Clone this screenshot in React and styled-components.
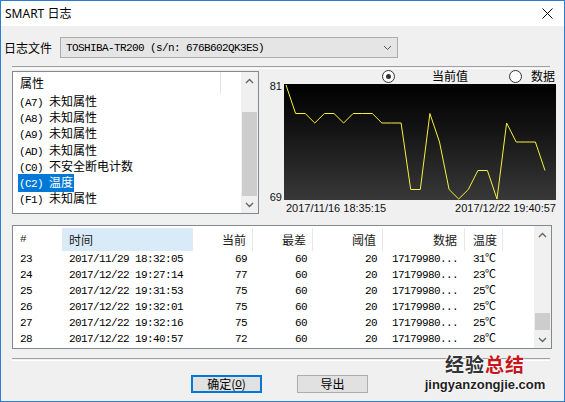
import React from 'react';
import styled, { createGlobalStyle, css } from 'styled-components';

const CJK = `"Noto Sans CJK SC", "Noto Sans", sans-serif`;
const MONO = `"Liberation Mono", "Noto Sans CJK SC", monospace`;
const SANS = `"Liberation Sans", Arial, sans-serif`;

const GlobalStyle = createGlobalStyle`
  html, body {
    margin: 0;
    padding: 0;
    background: #fff;
  }
  body {
    font-family: ${CJK};
    font-size: 12px;
    color: #000;
  }
`;

const Window = styled.div`
  position: relative;
  width: 565px;
  height: 402px;
  box-sizing: border-box;
  border: 1px solid #2b7fcf;
  display: flex;
  flex-direction: column;
  overflow: hidden;
`;

const TitleBar = styled.div`
  height: 25px;
  flex: none;
  background: #fff;
  display: flex;
  align-items: center;
  justify-content: space-between;
  padding: 0 11px 0 4px;
`;

const Title = styled.div`
  font-family: "Noto Sans", ${CJK};
  font-size: 12px;
  line-height: 14px;
`;

const Body = styled.div`
  flex: 1;
  background: #f0f0f0;
  display: flex;
  flex-direction: column;
  padding-top: 11px;
`;

const FileRow = styled.div`
  display: flex;
  align-items: center;
  height: 21px;
  padding-left: 3px;
`;

const Label = styled.div`
  width: 56px;
  font-size: 12px;
  line-height: 16px;
`;

const Combo = styled.div`
  width: 338px;
  height: 21px;
  box-sizing: border-box;
  border: 1px solid #acacac;
  background: #e5e5e5;
  display: flex;
  align-items: center;
  justify-content: space-between;
  padding: 0 5px 0 5px;
`;

const Mono = styled.span`
  font-family: ${MONO};
  font-size: 11px;
  letter-spacing: -0.6px;
  white-space: pre;
`;

const Separator = styled.div`
  margin: ${(p) => p.$top || 0}px 0 0 11px;
  width: 538px;
  height: 1px;
  border-top: 1px solid #a0a0a0;
  border-bottom: 1px solid #fff;
`;

const Middle = styled.div`
  display: flex;
  align-items: flex-start;
  margin-left: 11px;
  gap: 4px;
`;

const ListBox = styled.div`
  margin-top: 2px;
  width: 247px;
  height: 143px;
  box-sizing: border-box;
  border: 1px solid #828790;
  background: #fff;
  display: flex;
`;

const ListContent = styled.div`
  flex: 1;
  display: flex;
  flex-direction: column;
`;

const ListHeader = styled.div`
  height: 22px;
  display: flex;
`;

const ListHeaderCell = styled.div`
  width: 200px;
  padding-left: 7px;
  border-right: 1px solid #e5e5e5;
  line-height: 22px;
  font-size: 12px;
  color: #000;
`;

const ListRow = styled.div`
  height: 16.2px;
  line-height: 16px;
  padding-left: 5px;
  display: flex;
  align-items: center;
`;

const ListItem = styled.span`
  padding: 0 1px;
  line-height: 16px;
  ${(p) =>
    p.$selected &&
    css`
      background: #0078d7;
      color: #fff;
    `}
`;

const Name = styled.span`
  font-family: ${CJK};
  font-size: 12px;
`;

const ScrollBar = styled.div`
  width: 17px;
  flex: none;
  background: #f0f0f0;
  display: flex;
  flex-direction: column;
`;

const ArrowBox = styled.div`
  height: 17px;
  flex: none;
  display: flex;
  align-items: center;
  justify-content: center;
`;

const Track = styled.div`
  flex: 1;
  display: flex;
  flex-direction: column;
`;

const Thumb = styled.div`
  margin: ${(p) => p.$offset}px 1px 0;
  height: ${(p) => p.$size}px;
  background: #cdcdcd;
`;

const RightPanel = styled.div`
  width: 295px;
  display: flex;
  flex-direction: column;
`;

const RadioRow = styled.div`
  height: 14px;
  display: flex;
  justify-content: flex-end;
  align-items: center;
  gap: 41px;
  padding-right: 3px;
`;

const RadioOption = styled.div`
  width: ${(p) => p.$width}px;
  display: flex;
  align-items: center;
  justify-content: space-between;
  font-size: 12px;
  line-height: 14px;
`;

const RadioCircle = styled.span`
  width: 11px;
  height: 11px;
  border: 1px solid #333;
  border-radius: 50%;
  background: #fff;
  display: flex;
  align-items: center;
  justify-content: center;
  &::after {
    content: '';
    width: 5px;
    height: 5px;
    border-radius: 50%;
    background: ${(p) => (p.$checked ? '#333' : 'transparent')};
  }
`;

const ChartRow = styled.div`
  margin-top: 1px;
  display: grid;
  grid-template-columns: 21px 272px;
  height: 116px;
`;

const AxisLabels = styled.div`
  display: flex;
  flex-direction: column;
  justify-content: space-between;
  align-items: flex-end;
  padding-right: 2px;
  font-family: ${SANS};
  font-size: 11px;
  line-height: 11px;
  color: #111;
  margin-top: -3px;
  margin-bottom: -3px;
`;

const Chart = styled.div`
  background: linear-gradient(#000 0%, #141414 40%, #383838 100%);
  svg {
    display: block;
  }
`;

const DateRow = styled.div`
  height: 16px;
  display: flex;
  justify-content: space-between;
  align-items: center;
  padding: 0 2px 0 23px;
  font-family: ${SANS};
  font-size: 11px;
  color: #111;
`;

const Table = styled.div`
  margin: 9px 0 0 11px;
  width: 540px;
  height: 124px;
  box-sizing: border-box;
  border: 1px solid #828790;
  background: #fff;
  display: flex;
`;

const TableContent = styled.div`
  flex: 1;
  display: flex;
  flex-direction: column;
`;

const COLS = '50px 130px 60px 60px 70px 82px 38px 1fr';

const HeaderRow = styled.div`
  display: grid;
  grid-template-columns: ${COLS};
  height: 25px;
`;

const HeaderCell = styled.div`
  font-size: 12px;
  line-height: 23px;
  margin-top: 2px;
  color: #1a1a1a;
  border-right: 1px solid ${(p) => (p.$last ? 'transparent' : '#e8e8e8')};
  text-align: ${(p) => p.$align};
  padding: ${(p) => (p.$align === 'right' ? `0 ${p.$pad}px 0 0` : `0 0 0 ${p.$pad}px`)};
  background: ${(p) => (p.$active ? '#d9ebf9' : 'transparent')};
  ${(p) =>
    p.$hash &&
    css`
      font-family: ${MONO};
      font-size: 11px;
    `}
`;

const DataRow = styled.div`
  display: grid;
  grid-template-columns: ${COLS};
  height: 16px;
  align-items: center;
`;

const Cell = styled.div`
  font-family: ${MONO};
  font-size: 11px;
  letter-spacing: -0.6px;
  line-height: 16px;
  white-space: pre;
  text-align: ${(p) => p.$align};
  padding: ${(p) => (p.$align === 'right' ? `0 ${p.$pad}px 0 0` : `0 0 0 ${p.$pad}px`)};
`;

const ButtonRow = styled.div`
  margin-top: 14px;
  display: flex;
  gap: 35px;
  padding-left: 190px;
`;

const Button = styled.div`
  width: 71px;
  height: 18px;
  box-sizing: border-box;
  background: #e1e1e1;
  border: 1px solid ${(p) => (p.$default ? '#0078d7' : '#adadad')};
  box-shadow: ${(p) => (p.$default ? 'inset 0 0 0 1px #0078d7' : 'none')};
  display: flex;
  align-items: center;
  justify-content: center;
  font-size: 12px;
  line-height: 14px;
  u {
    font-family: ${MONO};
    font-size: 11px;
  }
`;

const Watermark = styled.div`
  position: absolute;
  left: 414px;
  top: 353px;
  display: flex;
  flex-direction: column;
  align-items: center;
  width: 140px;
  text-shadow: 0 0 2px #fff, 0 0 2px #fff, 0 0 1px #fff;
`;

const WmTitle = styled.div`
  font-family: ${CJK};
  font-weight: 700;
  font-size: 19px;
  line-height: 20px;
  letter-spacing: 1px;
  color: #333;
  span {
    color: #c8161d;
  }
`;

const WmUrl = styled.div`
  font-family: ${SANS};
  font-weight: 700;
  font-size: 13px;
  line-height: 14px;
  color: #222;
  margin-top: 4px;
`;

const Chevron = ({ up }) => (
  <svg width="9" height="6" viewBox="0 0 9 6">
    <polyline
      points={up ? '1,5 4.5,1.5 8,5' : '1,1 4.5,4.5 8,1'}
      fill="none"
      stroke="#606060"
      strokeWidth="1.3"
    />
  </svg>
);

const Scroll = ({ offset, size }) => (
  <ScrollBar>
    <ArrowBox>
      <Chevron up />
    </ArrowBox>
    <Track>
      <Thumb $offset={offset} $size={size} />
    </Track>
    <ArrowBox>
      <Chevron />
    </ArrowBox>
  </ScrollBar>
);

const attrs = [
  ['(A7) ', '未知属性'],
  ['(A8) ', '未知属性'],
  ['(A9) ', '未知属性'],
  ['(AD) ', '未知属性'],
  ['(C0) ', '不安全断电计数'],
  ['(C2) ', '温度'],
  ['(F1) ', '未知属性'],
];

const values = [
  81, 78, 78, 77, 78, 78, 77, 78, 78, 78, 77, 77, 77, 70, 70, 78, 75, 70, 69, 70,
  72, 72, 69, 77, 75, 75, 75, 72,
];

const points = values
  .map((v, i) => `${(2 + i * (259 / 27)).toFixed(1)},${(1 + (81 - v) * 9.5).toFixed(1)}`)
  .join(' ');

const columns = [
  { title: '#', align: 'left', pad: 7, hash: true },
  { title: '时间', align: 'left', pad: 6, active: true },
  { title: '当前', align: 'right', pad: 6 },
  { title: '最差', align: 'right', pad: 6 },
  { title: '阈值', align: 'right', pad: 6 },
  { title: '数据', align: 'right', pad: 7 },
  { title: '温度', align: 'left', pad: 8 },
];

const rows = [
  ['23', '2017/11/29 18:32:05', '69', '60', '20', '17179980...', '31℃'],
  ['24', '2017/12/22 19:27:14', '77', '60', '20', '17179980...', '23℃'],
  ['25', '2017/12/22 19:31:53', '75', '60', '20', '17179980...', '25℃'],
  ['26', '2017/12/22 19:32:01', '75', '60', '20', '17179980...', '25℃'],
  ['27', '2017/12/22 19:32:16', '75', '60', '20', '17179980...', '25℃'],
  ['28', '2017/12/22 19:40:57', '72', '60', '20', '17179980...', '28℃'],
];

export default function App() {
  return (
    <>
      <GlobalStyle />
      <Window>
        <TitleBar>
          <Title>SMART 日志</Title>
          <svg width="11" height="11" viewBox="0 0 11 11">
            <path d="M0.5 0.5 L10.5 10.5 M10.5 0.5 L0.5 10.5" stroke="#000" strokeWidth="1" />
          </svg>
        </TitleBar>
        <Body>
          <FileRow>
            <Label>日志文件</Label>
            <Combo>
              <Mono>TOSHIBA-TR200 (s/n: 676B602QK3ES)</Mono>
              <svg width="9" height="6" viewBox="0 0 9 6">
                <polyline points="1,1 4.5,4.5 8,1" fill="none" stroke="#555" strokeWidth="1" />
              </svg>
            </Combo>
          </FileRow>
          <Separator $top={8} />
          <Middle>
            <ListBox>
              <ListContent>
                <ListHeader>
                  <ListHeaderCell>属性</ListHeaderCell>
                </ListHeader>
                {attrs.map(([code, name], i) => (
                  <ListRow key={i}>
                    <ListItem $selected={code.startsWith('(C2)')}>
                      <Mono>{code}</Mono>
                      <Name>{name}</Name>
                    </ListItem>
                  </ListRow>
                ))}
              </ListContent>
              <Scroll offset={23} size={84} />
            </ListBox>
            <RightPanel>
              <RadioRow>
                <RadioOption $width={86}>
                  <RadioCircle $checked />
                  <span>当前值</span>
                </RadioOption>
                <RadioOption $width={46}>
                  <RadioCircle />
                  <span>数据</span>
                </RadioOption>
              </RadioRow>
              <ChartRow>
                <AxisLabels>
                  <span>81</span>
                  <span>69</span>
                </AxisLabels>
                <Chart>
                  <svg width="272" height="116" viewBox="0 0 272 116">
                    <polyline points={points} fill="none" stroke="#f4f23c" strokeWidth="1" />
                  </svg>
                </Chart>
              </ChartRow>
              <DateRow>
                <span>2017/11/16 18:35:15</span>
                <span>2017/12/22 19:40:57</span>
              </DateRow>
            </RightPanel>
          </Middle>
          <Table>
            <TableContent>
              <HeaderRow>
                {columns.map((c) => (
                  <HeaderCell
                    key={c.title}
                    $align={c.align}
                    $pad={c.pad}
                    $active={c.active}
                    $hash={c.hash}
                  >
                    {c.title}
                  </HeaderCell>
                ))}
                <HeaderCell $align="left" $pad={0} $last />
              </HeaderRow>
              {rows.map((r) => (
                <DataRow key={r[0]}>
                  {r.map((v, i) => (
                    <Cell key={i} $align={columns[i].align} $pad={columns[i].pad}>
                      {v}
                    </Cell>
                  ))}
                </DataRow>
              ))}
            </TableContent>
            <Scroll offset={70} size={17} />
          </Table>
          <Separator $top={9} />
          <ButtonRow>
            <Button $default>
              确定(<u>O</u>)
            </Button>
            <Button>导出</Button>
          </ButtonRow>
        </Body>
        <Watermark>
          <WmTitle>
            经验<span>总结</span>
          </WmTitle>
          <WmUrl>jingyanzongjie.com</WmUrl>
        </Watermark>
      </Window>
    </>
  );
}
